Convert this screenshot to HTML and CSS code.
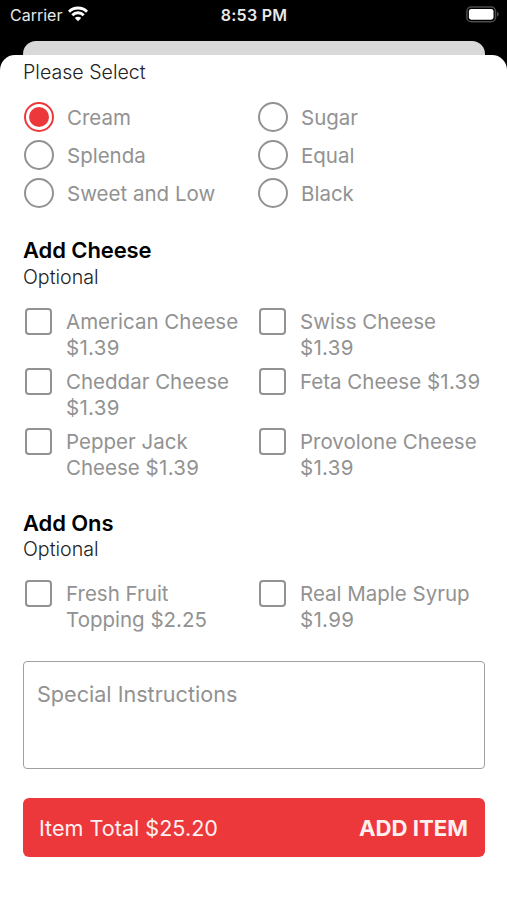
FILE: index.html
```html
<!DOCTYPE html>
<html lang="en">
<head>
<meta charset="utf-8">
<title>Customize Item</title>
<link rel="stylesheet" href="styles.css">
</head>
<body>
<header class="status">
  <div class="carrier"><span class="carrier-name">Carrier</span>
    <svg class="wifi" width="20" height="16" viewBox="0 0 20 16" fill="none" stroke="#fff" stroke-width="2.9"><path d="M1 5.7a12.7 12.7 0 0 1 18 0"/><path d="M4.3 9.2a8 8 0 0 1 11.4 0"/><path d="M10 15.3l-3.2-3.3a4.6 4.6 0 0 1 6.4 0z" fill="#fff" stroke="none"/></svg>
  </div>
  <div class="time">8:53 PM</div>
  <svg class="battery" width="33" height="17" viewBox="0 0 33 17"><rect x=".9" y=".9" width="28.6" height="14.8" rx="4.3" fill="none" stroke="#4b4b4b" stroke-width="1.5"/><rect x="2.9" y="2.9" width="24.6" height="10.8" rx="2.4" fill="#fff"/><path d="M31 5.8q1.7.8 1.7 2.5t-1.7 2.5z" fill="#4b4b4b"/></svg>
</header>
<div class="back-sheet"></div>
<main class="sheet">
  <p class="note">Please Select</p>
  <div class="radios">
    <label class="radio selected"><i class="ring"></i><span>Cream</span></label>
    <label class="radio"><i class="ring"></i><span>Sugar</span></label>
    <label class="radio"><i class="ring"></i><span>Splenda</span></label>
    <label class="radio"><i class="ring"></i><span>Equal</span></label>
    <label class="radio"><i class="ring"></i><span>Sweet and Low</span></label>
    <label class="radio"><i class="ring"></i><span>Black</span></label>
  </div>
  <h2 class="cheese-title">Add Cheese</h2>
  <p class="note">Optional</p>
  <div class="checks">
    <label class="check"><i class="box"></i><span>American Cheese<br><span class="price">$1.39</span></span></label>
    <label class="check"><i class="box"></i><span>Swiss Cheese<br><span class="price">$1.39</span></span></label>
    <label class="check"><i class="box"></i><span>Cheddar Cheese<br><span class="price">$1.39</span></span></label>
    <label class="check"><i class="box"></i><span>Feta Cheese <span class="price">$1.39</span></span></label>
    <label class="check"><i class="box"></i><span>Pepper Jack<br>Cheese <span class="price">$1.39</span></span></label>
    <label class="check"><i class="box"></i><span>Provolone Cheese<br><span class="price">$1.39</span></span></label>
  </div>
  <h2 class="addons-title">Add Ons</h2>
  <p class="note">Optional</p>
  <div class="checks">
    <label class="check"><i class="box"></i><span>Fresh Fruit<br>Topping $2.25</span></label>
    <label class="check"><i class="box"></i><span>Real Maple Syrup<br><span class="price">$1.99</span></span></label>
  </div>
  <div class="instructions">Special Instructions</div>
  <div class="total"><span>Item Total $25.20</span><b>ADD ITEM</b></div>
</main>
</body>
</html>
```
FILE: styles.css
```css
* { box-sizing: border-box; }
body {
  margin: 0;
  height: 900px;
  overflow: hidden;
  display: flex;
  flex-direction: column;
  background: #000;
  font: 400 20.5px/26px Inter, "Liberation Sans", sans-serif;
  color: #929292;
}
p, h2 { margin: 0; }
.status {
  height: 41px;
  padding: 0 8px 0 10px;
  display: grid;
  grid-template-columns: 1fr auto 1fr;
  align-items: start;
  color: #e8e8e8;
  font-size: 16px;
  line-height: 30px;
}
.carrier { display: flex; gap: 6px; }
.wifi { margin-top: 6px; }
.time { font-weight: 600; letter-spacing: 0.25px; margin-right: 1px; }
.battery { justify-self: end; margin-top: 6px; }
.back-sheet {
  height: 28px;
  margin: 0 22px 0 23px;
  background: #d9d9d9;
  border-radius: 13px 13px 0 0;
}
.sheet {
  flex: 1;
  margin-top: -14px;
  padding: 4px 22px 0 23px;
  background: #fff;
  border-radius: 15px 15px 0 0;
}
.note { font-size: 19.6px; color: #222; font-weight: 300; }
.radios {
  margin-top: 13px;
  display: grid;
  grid-template-columns: 234px 1fr;
  grid-auto-rows: 38px;
}
.radio { display: flex; align-items: center; gap: 13px; padding-left: 1px; }
.radio span { padding-top: 2px; }
.ring {
  width: 30px;
  height: 30px;
  border: 2px solid #929292;
  border-radius: 50%;
}
.selected .ring {
  border-color: #ed383b;
  background: #ed383b;
  background-clip: content-box;
  padding: 3px;
}
h2 { font-size: 22px; font-weight: 600; color: #000; letter-spacing: -0.1px; }
.cheese-title { margin-top: 25px; }
.cheese-title + .note { margin-top: 1px; }
.addons-title { margin-top: 29px; }
.checks {
  margin-top: 19px;
  display: grid;
  grid-template-columns: 234px 1fr;
  row-gap: 8px;
}
.check { display: flex; align-items: flex-start; gap: 14px; padding-left: 2px; white-space: nowrap; }
.price { letter-spacing: 0.3px; }
.box {
  flex: none;
  width: 27px;
  height: 27px;
  margin-top: -1px;
  border: 2px solid #929292;
  border-radius: 4px;
}
.instructions {
  margin-top: 28px;
  height: 108px;
  padding: 19px 13px;
  border: 1.5px solid #a0a0a0;
  border-radius: 4px;
  font-size: 21.6px;
}
.total {
  margin-top: 29px;
  height: 59px;
  padding: 0 17px 0 16px;
  display: flex;
  align-items: center;
  justify-content: space-between;
  background: #ed383b;
  border-radius: 6px;
  color: #fff0f0;
  font-size: 21.6px;
}
.total b { font-weight: 700; font-size: 22.2px; }
```
